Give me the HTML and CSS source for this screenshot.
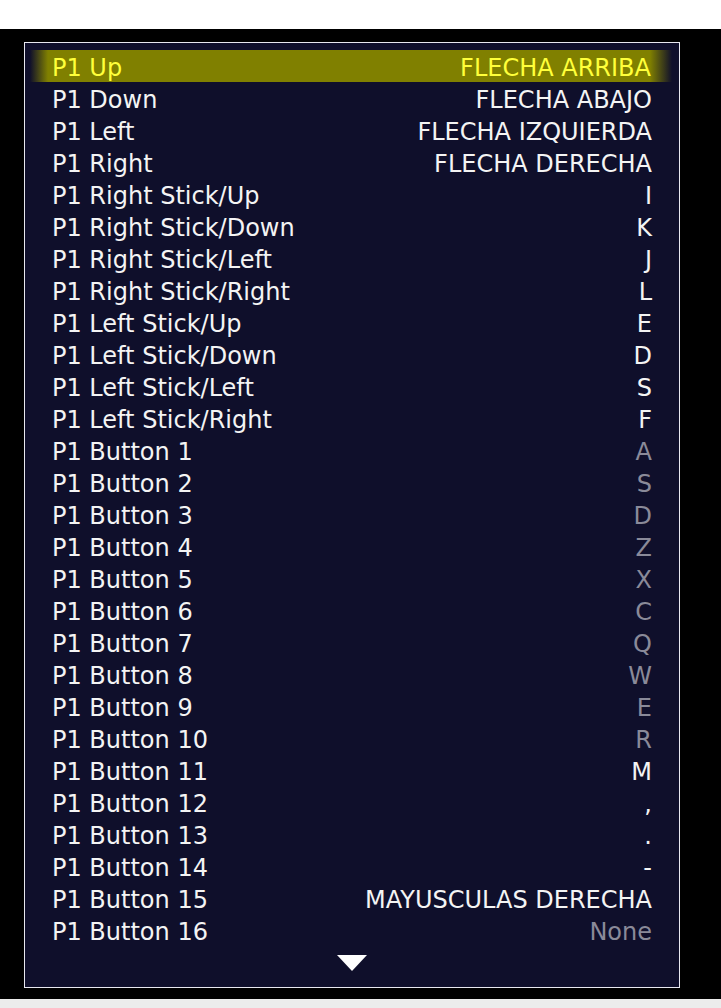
FILE: index.html
```html
<!DOCTYPE html>
<html lang="es">
<head>
  <meta charset="UTF-8">
  <title>Controles</title>
  <link rel="stylesheet" href="styles.css">
</head>
<body>
  <div class="topbar"></div>

  <main class="screen">
    <div class="panel">
      <ul class="binds">
        <li class="row selected"><span>P1 Up</span><span>FLECHA ARRIBA</span></li>
        <li class="row"><span>P1 Down</span><span>FLECHA ABAJO</span></li>
        <li class="row"><span>P1 Left</span><span>FLECHA IZQUIERDA</span></li>
        <li class="row"><span>P1 Right</span><span>FLECHA DERECHA</span></li>
        <li class="row"><span>P1 Right Stick/Up</span><span>I</span></li>
        <li class="row"><span>P1 Right Stick/Down</span><span>K</span></li>
        <li class="row"><span>P1 Right Stick/Left</span><span>J</span></li>
        <li class="row"><span>P1 Right Stick/Right</span><span>L</span></li>
        <li class="row"><span>P1 Left Stick/Up</span><span>E</span></li>
        <li class="row"><span>P1 Left Stick/Down</span><span>D</span></li>
        <li class="row"><span>P1 Left Stick/Left</span><span>S</span></li>
        <li class="row"><span>P1 Left Stick/Right</span><span>F</span></li>
        <li class="row"><span>P1 Button 1</span><span class="dim">A</span></li>
        <li class="row"><span>P1 Button 2</span><span class="dim">S</span></li>
        <li class="row"><span>P1 Button 3</span><span class="dim">D</span></li>
        <li class="row"><span>P1 Button 4</span><span class="dim">Z</span></li>
        <li class="row"><span>P1 Button 5</span><span class="dim">X</span></li>
        <li class="row"><span>P1 Button 6</span><span class="dim">C</span></li>
        <li class="row"><span>P1 Button 7</span><span class="dim">Q</span></li>
        <li class="row"><span>P1 Button 8</span><span class="dim">W</span></li>
        <li class="row"><span>P1 Button 9</span><span class="dim">E</span></li>
        <li class="row"><span>P1 Button 10</span><span class="dim">R</span></li>
        <li class="row"><span>P1 Button 11</span><span>M</span></li>
        <li class="row"><span>P1 Button 12</span><span>,</span></li>
        <li class="row"><span>P1 Button 13</span><span>.</span></li>
        <li class="row"><span>P1 Button 14</span><span>-</span></li>
        <li class="row"><span>P1 Button 15</span><span>MAYUSCULAS DERECHA</span></li>
        <li class="row"><span>P1 Button 16</span><span class="dim">None</span></li>
      </ul>
      <div class="more"></div>
    </div>
  </main>

  <div class="bottombar"></div>
</body>
</html>
```

FILE: styles.css
```css
body {
  margin: 0;
  padding: 0;
  background: black;
  font-family: "DejaVu Sans", Verdana, sans-serif;
}
.topbar {
  height: 29px;
  background: #fff;
}
.screen {
  height: 970px;
  padding: 13px 0 0 24px;
  box-sizing: border-box;
}
.panel {
  width: 656px;
  height: 946px;
  box-sizing: border-box;
  border: 1px solid #e8e8f0;
  background: #0f0f2b;
  padding-top: 7px;
}
.binds {
  list-style: none;
  margin: 0;
  padding: 0;
}
.row {
  display: flex;
  justify-content: space-between;
  align-items: center;
  box-sizing: border-box;
  height: 32px;
  padding: 5px 27px 0 27px;
  color: #f4f4f4;
  font-size: 24px;
  line-height: 27px;
  white-space: nowrap;
}
.row.selected {
  margin: 0 7px 0 5px;
  padding: 5px 21px 0 22px;
  color: #ffff3a;
  background: linear-gradient(to right, rgba(128, 128, 0, 0) 0, #808000 18px, #808000 calc(100% - 22px), rgba(128, 128, 0, 0) 100%);
}
.dim {
  color: #8a8a99;
}
.more {
  width: 0;
  height: 0;
  margin: 9px auto 0;
  border-left: 15px solid transparent;
  border-right: 15px solid transparent;
  border-top: 16px solid #fff;
}
.bottombar {
  height: 9px;
  background: #ececec;
}
```
